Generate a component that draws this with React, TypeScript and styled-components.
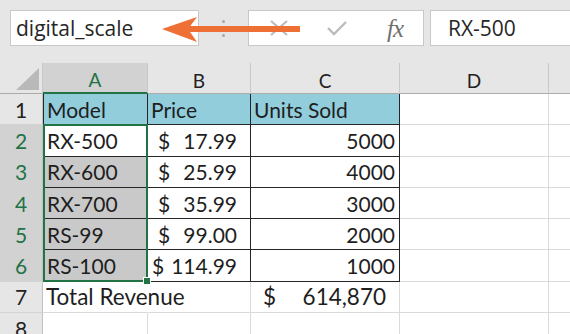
import { Fragment } from "react";
import styled, { createGlobalStyle } from "styled-components";

const GREEN = "#217346";
const GRID = "#dadada";
const LINE = "#262626";
const BLUE = "#92cddc";
const SEL = "#c9c9c9";

const GlobalStyle = createGlobalStyle`
  html, body { margin: 0; padding: 0; background: #fff; }
  body { width: 570px; height: 334px; overflow: hidden; }
`;

const Window = styled.div`
  width: 570px;
  height: 334px;
  overflow: hidden;
  background: #fff;
  display: flex;
  flex-direction: column;
`;

const Toolbar = styled.div`
  position: relative;
  flex: none;
  height: 63px;
  box-sizing: border-box;
  padding: 10px 0 0 10px;
  background: #e6e6e6;
  display: flex;
  align-items: flex-start;
`;

const NameBox = styled.div`
  width: 189px;
  height: 36px;
  flex: none;
  box-sizing: border-box;
  padding-left: 5px;
  background: #fff;
  border: 1px solid #c8c8c8;
  display: flex;
  align-items: center;
  font-family: "Open Sans", "Noto Sans", sans-serif;
  font-size: 21px;
  color: #262626;
`;

const Grip = styled.div`
  width: 49px;
  height: 36px;
  flex: none;
  display: flex;
  flex-direction: column;
  align-items: center;
  justify-content: center;
  gap: 4px;
  & > span {
    width: 3px;
    height: 3px;
    border-radius: 50%;
    background: #a8a8a8;
  }
`;

const IconBox = styled.div`
  width: 176px;
  height: 36px;
  flex: none;
  box-sizing: border-box;
  padding-left: 20px;
  background: #fff;
  border: 1px solid #c8c8c8;
  display: flex;
  align-items: center;
  gap: 38px;
`;

const Icon = styled.div`
  width: 20px;
  height: 22px;
  display: flex;
  align-items: center;
  justify-content: center;
`;

const Fx = styled.span`
  font-family: "Liberation Serif", serif;
  font-style: italic;
  font-size: 25px;
  color: #707070;
  letter-spacing: -1px;
  line-height: 1;
`;

const Formula = styled.div`
  flex: 1;
  height: 36px;
  margin-left: 6px;
  margin-right: -2px;
  box-sizing: border-box;
  padding-left: 17px;
  background: #fff;
  border: 1px solid #c8c8c8;
  display: flex;
  align-items: center;
  font-family: "Open Sans", "Noto Sans", sans-serif;
  font-size: 21px;
  color: #262626;
`;

const Arrow = styled.svg`
  position: absolute;
  left: 0;
  top: 0;
  pointer-events: none;
`;

const SheetArea = styled.div`
  position: relative;
`;

const Sheet = styled.div`
  display: grid;
  grid-template-columns: 43px 105px 103px 149px 149px 149px;
  grid-template-rows: 31px repeat(8, 31.3px);
  font-family: Lato, "Liberation Sans", sans-serif;
  color: #1e1e1e;
`;

const Overlay = styled(Sheet)`
  position: absolute;
  inset: 0;
  pointer-events: none;
`;

const Corner = styled.div`
  background: #e6e6e6;
  border-right: 1px solid #c8c8c8;
  border-bottom: 1px solid #ababab;
  display: flex;
  justify-content: flex-end;
  align-items: flex-end;
  padding: 0 3px 3px 0;
`;

const Triangle = styled.div`
  width: 0;
  height: 0;
  border-left: 23px solid transparent;
  border-bottom: 22px solid #b9b9b9;
`;

const ColHead = styled.div<{ $sel?: boolean }>`
  background: ${(p) => (p.$sel ? "#d2d2d2" : "#e6e6e6")};
  color: ${(p) => (p.$sel ? GREEN : "#222")};
  border-right: 1px solid #c8c8c8;
  border-bottom: ${(p) => (p.$sel ? `2px solid ${GREEN}` : "1px solid #ababab")};
  display: flex;
  align-items: flex-end;
  justify-content: center;
  padding-bottom: 3px;
  box-sizing: border-box;
  font-size: 19px;
  line-height: 1;
`;

const RowHead = styled.div<{ $sel?: boolean }>`
  background: ${(p) => (p.$sel ? "#d2d2d2" : "#e6e6e6")};
  color: ${(p) => (p.$sel ? GREEN : "#222")};
  border-right: 1px solid #c2c2c2;
  border-bottom: 1px solid #d4d4d4;
  box-sizing: border-box;
  display: flex;
  align-items: center;
  justify-content: center;
  font-size: 21px;
  line-height: 31px;
`;

const Cell = styled.div<{
  $fill?: string;
  $left?: string;
  $right?: string;
  $bottom?: string;
  $end?: boolean;
  $big?: boolean;
}>`
  background: ${(p) => p.$fill ?? "transparent"};
  border-left: ${(p) => (p.$left ? `1px solid ${p.$left}` : "none")};
  border-right: 1px solid ${(p) => p.$right ?? GRID};
  border-bottom: 1px solid ${(p) => p.$bottom ?? GRID};
  box-sizing: border-box;
  display: flex;
  align-items: center;
  justify-content: ${(p) => (p.$end ? "flex-end" : "flex-start")};
  padding: 0 4px 0 3px;
  font-size: ${(p) => (p.$big ? 22.5 : 21)}px;
  line-height: 31px;
  white-space: nowrap;
  min-width: 0;
`;

const Money = styled(Cell)<{ $pl: number; $pr: number }>`
  justify-content: space-between;
  padding-left: ${(p) => p.$pl}px;
  padding-right: ${(p) => p.$pr}px;
`;

const Selection = styled.div`
  grid-column: 2;
  grid-row: 3 / 8;
  position: relative;
  border: 2px solid ${GREEN};
  box-sizing: border-box;
  margin-top: -1px;
`;

const Handle = styled.div`
  position: absolute;
  right: -5px;
  bottom: -5px;
  width: 6px;
  height: 6px;
  background: ${GREEN};
  border: 1px solid #fff;
`;

type Row = {
  model: string;
  price: string;
  units: string;
};

const rows: Row[] = [
  { model: "RX-500", price: "17.99", units: "5000" },
  { model: "RX-600", price: "25.99", units: "4000" },
  { model: "RX-700", price: "35.99", units: "3000" },
  { model: "RS-99", price: "99.00", units: "2000" },
  { model: "RS-100", price: "114.99", units: "1000" },
];

const XIcon = () => (
  <svg width="20" height="16" viewBox="0 0 20 16">
    <path d="M2 1 L18 15 M18 1 L2 15" stroke="#bcbcbc" strokeWidth="2.2" fill="none" />
  </svg>
);

const CheckIcon = () => (
  <svg width="20" height="16" viewBox="0 0 20 16">
    <path d="M1 8 L7 14 L19 2" stroke="#bcbcbc" strokeWidth="2.4" fill="none" />
  </svg>
);

export default function App() {
  return (
    <Window>
      <GlobalStyle />
      <Toolbar>
        <NameBox>digital_scale</NameBox>
        <Grip>
          <span />
          <span />
          <span />
        </Grip>
        <IconBox>
          <Icon>
            <XIcon />
          </Icon>
          <Icon>
            <CheckIcon />
          </Icon>
          <Icon>
            <Fx>fx</Fx>
          </Icon>
        </IconBox>
        <Formula>RX-500</Formula>
        <Arrow width="320" height="63" viewBox="0 0 320 63">
          <rect x="186" y="26" width="114" height="6" fill="#ee7034" />
          <path d="M162 29 L197 17 L188 29 L197 42 Z" fill="#ee7034" />
        </Arrow>
      </Toolbar>

      <SheetArea>
        <Sheet>
          <Corner>
            <Triangle />
          </Corner>
          <ColHead $sel>A</ColHead>
          <ColHead>B</ColHead>
          <ColHead>C</ColHead>
          <ColHead>D</ColHead>
          <ColHead>E</ColHead>

          <RowHead>1</RowHead>
          <Cell $fill={BLUE} $left={LINE} $right={LINE} $bottom={LINE}>Model</Cell>
          <Cell $fill={BLUE} $right={LINE} $bottom={LINE}>Price</Cell>
          <Cell $fill={BLUE} $right={LINE} $bottom={LINE}>Units Sold</Cell>
          <Cell />
          <Cell />

          {rows.map((r, i) => (
            <Fragment key={r.model}>
              <RowHead $sel>{i + 2}</RowHead>
              <Cell $fill={i === 0 ? "#fff" : SEL} $left={LINE} $right={LINE} $bottom={LINE}>
                {r.model}
              </Cell>
              <Money $pl={r.price.length > 5 ? 4 : 10} $pr={13} $right={LINE} $bottom={LINE}>
                <span>$</span>
                <span>{r.price}</span>
              </Money>
              <Cell $end $right={LINE} $bottom={LINE}>
                {r.units}
              </Cell>
              <Cell />
              <Cell />
            </Fragment>
          ))}

          <RowHead>7</RowHead>
          <Cell $big $right="transparent">Total Revenue</Cell>
          <Cell />
          <Money $big $pl={12} $pr={13}>
            <span>$</span>
            <span>614,870</span>
          </Money>
          <Cell />
          <Cell />

          <RowHead>8</RowHead>
          <Cell />
          <Cell />
          <Cell />
          <Cell />
          <Cell />
        </Sheet>

        <Overlay>
          <Selection>
            <Handle />
          </Selection>
        </Overlay>
      </SheetArea>
    </Window>
  );
}
